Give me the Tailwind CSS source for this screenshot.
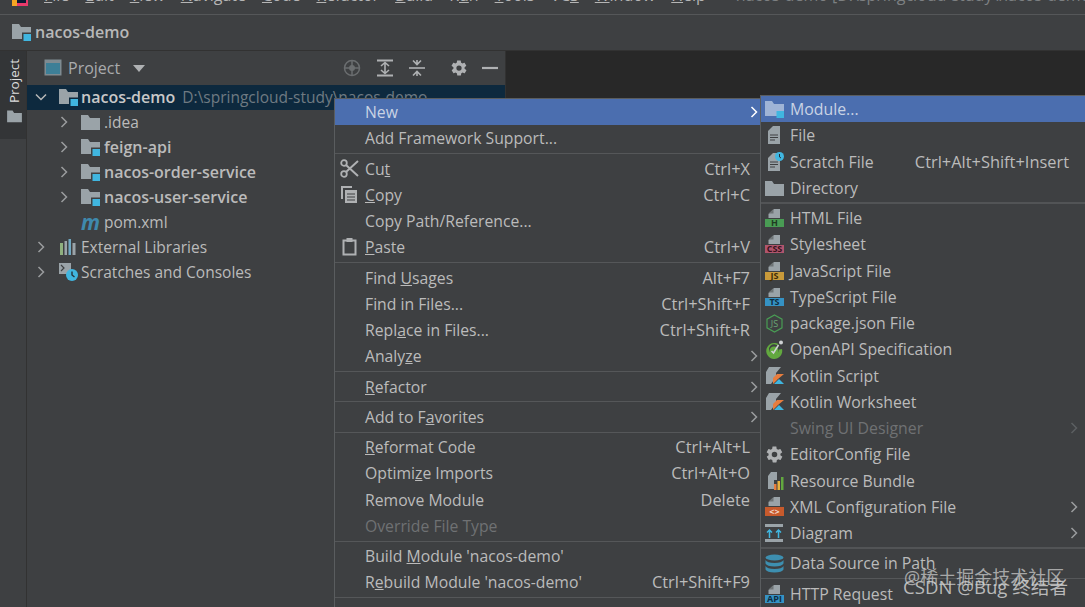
<!DOCTYPE html>
<html><head><meta charset="utf-8">
<script src="https://cdn.jsdelivr.net/npm/@tailwindcss/browser@4"></script>
</head>
<body class="m-0 bg-[#3e4042]">
<svg width="0" height="0" class="absolute">
<defs>
<symbol id="folder" viewBox="0 0 19 18"><path d="M0 2h7l2 3h10v12H0z" fill="#9aa3a8"/></symbol>
<symbol id="module" viewBox="0 0 19 18"><path d="M0 1h7l2 3h10v12H0z" fill="#9aa3a8"/><rect x="10" y="9.500" width="9" height="8.500" fill="#3e4042"/><rect x="11.500" y="11" width="7.500" height="7" fill="#40b6e0"/></symbol>
<symbol id="moduleSel" viewBox="0 0 19 18"><path d="M0 1h7l2 3h10v12H0z" fill="#9aa3a8"/><rect x="10" y="9.500" width="9" height="8.500" fill="#0d293e"/><rect x="11.500" y="11" width="7.500" height="7" fill="#40b6e0"/></symbol>
<symbol id="doc" viewBox="0 0 19 20"><path d="M8 1h7v18H3V6z" fill="#9aa3a8"/><path d="M5 10h8M5 12.500h8M5 15h5" stroke="#3e4042" stroke-width="1.200"/></symbol>
<symbol id="sheet" viewBox="0 0 19 10"><path d="M9 0h6v9H3.500V5z" fill="#9aa3a8"/><path d="M3.500 4.500L8.500 0v4.500z" fill="#6e7476"/></symbol>
<symbol id="kotlin" viewBox="0 0 19 19"><path d="M4 1h12l-5 6v4l-5 7H1V6z" fill="#9aa3a8"/><path d="M8 18v-6l4-4h7l-6 5z" fill="#e87d3e"/><path d="M9 18l5-5 5 5z" fill="#40b6e0"/></symbol>
<symbol id="chev" viewBox="0 0 10 14"><path d="M2.500 2l5 5-5 5" fill="none" stroke="currentColor" stroke-width="1.500"/></symbol>
</defs>
</svg>
<div class="relative w-[1085px] h-[607px] overflow-hidden bg-[#3e4042] text-[#bbbbbb] text-[15.75px] leading-[22px] font-['Open_Sans','Noto_Sans',sans-serif]">

<!-- menu bar -->
<div class="flex items-end h-[15px] overflow-hidden border-b border-[#555759] pb-[8px] pl-[12px]">
  <svg class="w-[16px] h-[18px] mr-[16px] shrink-0" viewBox="0 0 16 18"><rect x="0" y="0" width="16" height="18" fill="#e83a6b"/><rect x="3" y="0" width="11" height="15" fill="#0b1a33"/><rect x="0" y="12" width="5" height="6" fill="#f5a623"/></svg>
  <div class="flex gap-[16px] items-end text-[16px] text-[#b5b5b5]">
    <span><u>F</u>ile</span><span><u>E</u>dit</span><span><u>V</u>iew</span><span><u>N</u>avigate</span><span><u>C</u>ode</span><span><u>R</u>efactor</span><span><u>B</u>uild</span><span>R<u>u</u>n</span><span><u>T</u>ools</span><span>VC<u>S</u></span><span><u>W</u>indow</span><span><u>H</u>elp</span>
  </div>
  <span class="ml-[30px] text-[16px] text-[#7d8082] whitespace-nowrap">nacos-demo [D:\springcloud-study\nacos-demo]</span>
</div>

<!-- navigation bar -->
<div class="flex items-center h-[36px] pl-[12px] pb-[1px] gap-[4px] border-b border-[#323232] text-[16px] font-semibold text-[#b8b8b8]">
  <svg class="w-[19px] h-[18px]"><use href="#module"/></svg>
  <span>nacos-demo</span>
</div>

<!-- body -->
<div class="flex h-[556px]">
  <!-- stripe -->
  <div class="w-[27px] shrink-0 border-r border-[#323232]">
    <div class="flex flex-col items-center bg-[#333537] h-[88px] pt-[8px] pl-[2px] gap-[6px]">
      <span class="[writing-mode:vertical-rl] rotate-180 text-[13.5px] leading-[16px] text-[#dddddd]">Project</span>
      <svg class="w-[15px] h-[14px]"><use href="#folder"/></svg>
    </div>
  </div>
  <!-- project tool window -->
  <div class="w-[478px] shrink-0 flex flex-col text-[15.5px]">
    <div class="flex items-center h-[34px] pl-[17px] text-[16px] text-[#a9abad]">
      <svg class="w-[18px] h-[18px] mr-[6px]" viewBox="0 0 18 18"><rect x="0.500" y="0.500" width="17" height="16" fill="#7f8b91"/><rect x="2" y="4" width="14" height="11" fill="#3d7f97"/></svg>
      <span>Project</span>
      <svg class="w-[12px] h-[7px] ml-[13px]" viewBox="0 0 12 7"><path d="M0 0h12L6 7z" fill="#afb1b3"/></svg>
      <div class="ml-auto flex items-center gap-[14px] pr-[7px]">
        <svg class="w-[18px] h-[18px]" viewBox="0 0 18 18"><circle cx="9" cy="9" r="7.500" fill="none" stroke="#6b6e70" stroke-width="1.500"/><path d="M9 1v16M1 9h16" stroke="#6b6e70" stroke-width="1.500"/><circle cx="9" cy="9" r="3" fill="#6b6e70"/></svg>
        <svg class="w-[18px] h-[18px] ml-[1px]" viewBox="0 0 18 18"><path d="M1 1.500h16M1 16.500h16" stroke="#afb1b3" stroke-width="2"/><path d="M5 7l4-3.500L13 7M5 11l4 3.500L13 11M9 4v10" fill="none" stroke="#afb1b3" stroke-width="1.600"/></svg>
        <svg class="w-[18px] h-[18px]" viewBox="0 0 18 18"><path d="M1 9h16" stroke="#afb1b3" stroke-width="1.600"/><path d="M5 1.500l4 4 4-4M5 16.500l4-4 4 4M9 1v4.500M9 12.500V17" fill="none" stroke="#afb1b3" stroke-width="1.600"/></svg>
        <svg class="w-[18px] h-[18px] ml-[10px]" viewBox="0 0 24 24"><path fill="#afb1b3" d="M19.400 13c0-.3.100-.7.100-1s0-.7-.1-1l2.100-1.600c.2-.1.200-.4.100-.6l-2-3.500c-.1-.2-.4-.3-.6-.2l-2.500 1c-.5-.4-1.100-.7-1.700-1l-.4-2.600c0-.3-.2-.5-.5-.5h-4c-.3 0-.5.200-.5.400l-.4 2.700c-.6.200-1.200.6-1.700 1l-2.500-1c-.2-.1-.5 0-.6.200l-2 3.500c-.1.200-.1.500.1.600L4.600 11c0 .3-.1.700-.1 1s0 .7.1 1l-2.100 1.600c-.2.100-.2.400-.1.600l2 3.500c.1.200.4.300.6.200l2.500-1c.5.400 1.100.7 1.700 1l.4 2.600c0 .3.200.5.500.5h4c.3 0 .5-.2.500-.4l.4-2.700c.6-.2 1.200-.6 1.700-1l2.500 1c.2.100.5 0 .6-.2l2-3.500c.1-.2.100-.5-.1-.6zM12 15.500a3.500 3.500 0 1 1 0-7 3.500 3.500 0 0 1 0 7z"/></svg>
        <svg class="w-[16px] h-[16px]" viewBox="0 0 16 16"><path d="M0 8h16" stroke="#afb1b3" stroke-width="2.200"/></svg>
      </div>
    </div>
    <!-- tree -->
    <div class="flex flex-col">
      <div class="flex items-center h-[25px] pb-[2px] bg-[#0d293e] pl-[9px] whitespace-nowrap overflow-hidden">
        <svg class="w-[10px] h-[14px] rotate-90 text-[#b8b8b8]"><use href="#chev"/></svg>
        <svg class="w-[19px] h-[18px] ml-[13px] mr-[3px]"><use href="#moduleSel"/></svg>
        <span class="text-[16px] font-semibold text-[#c8c8c8]">nacos-demo</span>
        <span class="ml-[7px] text-[#6f7a82]">D:\springcloud-study\nacos-demo</span>
      </div>
      <div class="flex items-center h-[25px] pb-[2px] pl-[32px]">
        <svg class="w-[10px] h-[14px] text-[#9a9c9e]"><use href="#chev"/></svg>
        <svg class="w-[19px] h-[18px] ml-[12px] mr-[4px]"><use href="#folder"/></svg>
        <span>.idea</span>
      </div>
      <div class="flex items-center h-[25px] pb-[2px] pl-[32px] text-[16px] font-semibold">
        <svg class="w-[10px] h-[14px] text-[#9a9c9e]"><use href="#chev"/></svg>
        <svg class="w-[19px] h-[18px] ml-[12px] mr-[4px]"><use href="#module"/></svg>
        <span>feign-api</span>
      </div>
      <div class="flex items-center h-[25px] pb-[2px] pl-[32px] text-[16px] font-semibold">
        <svg class="w-[10px] h-[14px] text-[#9a9c9e]"><use href="#chev"/></svg>
        <svg class="w-[19px] h-[18px] ml-[12px] mr-[4px]"><use href="#module"/></svg>
        <span>nacos-order-service</span>
      </div>
      <div class="flex items-center h-[25px] pb-[2px] pl-[32px] text-[16px] font-semibold">
        <svg class="w-[10px] h-[14px] text-[#9a9c9e]"><use href="#chev"/></svg>
        <svg class="w-[19px] h-[18px] ml-[12px] mr-[4px]"><use href="#module"/></svg>
        <span>nacos-user-service</span>
      </div>
      <div class="flex items-center h-[25px] pb-[2px] pl-[54px]">
        <span class="w-[19px] mr-[4px] italic font-bold text-[21px] leading-[18px] text-[#3f89ad]">m</span>
        <span>pom.xml</span>
      </div>
      <div class="flex items-center h-[25px] pb-[2px] pl-[9px]">
        <svg class="w-[10px] h-[14px] text-[#9a9c9e]"><use href="#chev"/></svg>
        <svg class="w-[18px] h-[18px] ml-[13px] mr-[4px]" viewBox="0 0 18 18"><path d="M1 5h3v12H1z" fill="#8fb07f"/><path d="M5.500 3h2.500v14H5.500z" fill="#9aa3a8"/><path d="M9.500 1h2.500v16H9.500z" fill="#6fa8c2"/><path d="M13.500 5h3v12h-3z" fill="#9aa3a8"/></svg>
        <span>External Libraries</span>
      </div>
      <div class="flex items-center h-[25px] pb-[2px] pl-[9px]">
        <svg class="w-[10px] h-[14px] text-[#9a9c9e]"><use href="#chev"/></svg>
        <svg class="w-[19px] h-[19px] ml-[13px] mr-[3px]" viewBox="0 0 19 19"><rect x="0" y="1" width="12" height="11" fill="#9aa3a8"/><path d="M2 3l3 3-3 3" fill="none" stroke="#3e4042" stroke-width="1.200"/><circle cx="13" cy="13" r="6" fill="#40b6e0"/><path d="M13 9.500V13l2.500 2" fill="none" stroke="#26323a" stroke-width="1.400"/></svg>
        <span>Scratches and Consoles</span>
      </div>
    </div>
  </div>
  <!-- editor -->
  <div class="flex-1 bg-[#282828] border-l border-[#323232]"></div>
</div>

<!-- main context menu -->
<div class="absolute left-[334px] top-[98px] w-[426px] flex flex-col bg-[#3e4042] border-l border-t border-[#5a5d5f] whitespace-nowrap">
  <div class="flex items-center justify-between h-[26.250px] pl-[30px] pr-[1px] bg-[#4b6eaf] text-[#c9d3e4]"><span>New</span><svg class="w-[10px] h-[14px] text-white"><use href="#chev"/></svg></div>
  <div class="flex items-center h-[26.250px] pl-[30px]">Add Framework Support...</div>
  <div class="h-[4px] flex items-center"><div class="w-full h-px bg-[#555759]"></div></div>
  <div class="relative flex items-center justify-between h-[26.250px] pl-[30px] pr-[10px]"><svg class="absolute left-[5px] top-[3px] w-[19px] h-[19px]" viewBox="0 0 19 19"><circle cx="4" cy="15" r="2.800" fill="none" stroke="#afb1b3" stroke-width="1.800"/><circle cx="4" cy="4" r="2.800" fill="none" stroke="#afb1b3" stroke-width="1.800"/><path d="M6 6l12 11M6 13L18 2" stroke="#afb1b3" stroke-width="2"/></svg><span>Cu<u>t</u></span><span class="text-[16.4px]">Ctrl+X</span></div>
  <div class="relative flex items-center justify-between h-[26.250px] pl-[30px] pr-[10px]"><svg class="absolute left-[5px] top-[3px] w-[19px] h-[19px]" viewBox="0 0 19 19"><path d="M1 1h11v2H3v11H1z" fill="#afb1b3"/><rect x="5" y="5" width="12" height="13" fill="#afb1b3"/><path d="M7 9h8M7 12h8M7 15h8" stroke="#3e4042" stroke-width="1.200"/></svg><span><u>C</u>opy</span><span class="text-[16.4px]">Ctrl+C</span></div>
  <div class="flex items-center h-[26.250px] pl-[30px]">Copy Path/Reference...</div>
  <div class="relative flex items-center justify-between h-[26.250px] pl-[30px] pr-[10px]"><svg class="absolute left-[5px] top-[3px] w-[19px] h-[19px]" viewBox="0 0 19 19"><rect x="3.500" y="3.500" width="12" height="14" fill="none" stroke="#afb1b3" stroke-width="2"/><rect x="6.500" y="1" width="6" height="4" fill="#afb1b3"/></svg><span><u>P</u>aste</span><span class="text-[16.4px]">Ctrl+V</span></div>
  <div class="h-[4px] flex items-center"><div class="w-full h-px bg-[#555759]"></div></div>
  <div class="flex items-center justify-between h-[26.250px] pl-[30px] pr-[10px]"><span>Find <u>U</u>sages</span><span class="text-[16.4px]">Alt+F7</span></div>
  <div class="flex items-center justify-between h-[26.250px] pl-[30px] pr-[10px]"><span>Find in Files...</span><span class="text-[16.4px]">Ctrl+Shift+F</span></div>
  <div class="flex items-center justify-between h-[26.250px] pl-[30px] pr-[10px]"><span>Repl<u>a</u>ce in Files...</span><span class="text-[16.4px]">Ctrl+Shift+R</span></div>
  <div class="flex items-center justify-between h-[26.250px] pl-[30px] pr-[1px]"><span>Analy<u>z</u>e</span><svg class="w-[10px] h-[14px] text-[#9a9c9e]"><use href="#chev"/></svg></div>
  <div class="h-[4px] flex items-center"><div class="w-full h-px bg-[#555759]"></div></div>
  <div class="flex items-center justify-between h-[26.250px] pl-[30px] pr-[1px]"><span><u>R</u>efactor</span><svg class="w-[10px] h-[14px] text-[#9a9c9e]"><use href="#chev"/></svg></div>
  <div class="h-[4px] flex items-center"><div class="w-full h-px bg-[#555759]"></div></div>
  <div class="flex items-center justify-between h-[26.250px] pl-[30px] pr-[1px]"><span>Add to F<u>a</u>vorites</span><svg class="w-[10px] h-[14px] text-[#9a9c9e]"><use href="#chev"/></svg></div>
  <div class="h-[4px] flex items-center"><div class="w-full h-px bg-[#555759]"></div></div>
  <div class="flex items-center justify-between h-[26.250px] pl-[30px] pr-[10px]"><span><u>R</u>eformat Code</span><span class="text-[16.4px]">Ctrl+Alt+L</span></div>
  <div class="flex items-center justify-between h-[26.250px] pl-[30px] pr-[10px]"><span>Optimi<u>z</u>e Imports</span><span class="text-[16.4px]">Ctrl+Alt+O</span></div>
  <div class="flex items-center justify-between h-[26.250px] pl-[30px] pr-[10px]"><span>Remove Module</span><span class="text-[16.4px]">Delete</span></div>
  <div class="flex items-center h-[26.250px] pl-[30px] text-[#6f7173]">Override File Type</div>
  <div class="h-[4px] flex items-center"><div class="w-full h-px bg-[#555759]"></div></div>
  <div class="flex items-center h-[26.250px] pl-[30px]"><span>Build <u>M</u>odule 'nacos-demo'</span></div>
  <div class="flex items-center justify-between h-[26.250px] pl-[30px] pr-[10px]"><span>R<u>e</u>build Module 'nacos-demo'</span><span class="text-[16.4px]">Ctrl+Shift+F9</span></div>
  <div class="h-[4px] flex items-center"><div class="w-full h-px bg-[#555759]"></div></div>
  <div class="flex items-center justify-between h-[26.250px] pl-[30px] pr-[1px]"><span>Open In</span><svg class="w-[10px] h-[14px] text-[#9a9c9e]"><use href="#chev"/></svg></div>
</div>

<!-- submenu -->
<div class="absolute left-[760px] top-[95px] w-[325px] flex flex-col bg-[#3e4042] border-l border-t border-[#5a5d5f] whitespace-nowrap text-[15.85px]">
  <div class="flex items-center h-[26.250px] pl-[4px] bg-[#4b6eaf] text-[#c9d3e4]"><svg class="w-[19px] h-[18px] mr-[6px]" viewBox="0 0 19 18"><path d="M0 1h7l2 3h10v12H0z" fill="#9fb4d6"/><rect x="11.500" y="11" width="7.500" height="7" fill="#40b6e0"/></svg><span>Module...</span></div>
  <div class="flex items-center h-[26.250px] pl-[4px]"><svg class="w-[19px] h-[20px] mr-[6px]"><use href="#doc"/></svg><span>File</span></div>
  <div class="flex items-center justify-between h-[26.250px] pl-[4px] pr-[16px]"><span class="flex items-center"><span class="relative w-[19px] h-[20px] mr-[6px]"><svg class="w-[19px] h-[20px]"><use href="#doc"/></svg><svg class="absolute right-0 top-0 w-[9px] h-[9px]" viewBox="0 0 9 9"><circle cx="4.500" cy="4.500" r="4.500" fill="#40b6e0"/><path d="M4.500 2v3l1.500 1" stroke="#26323a" fill="none"/></svg></span><span>Scratch File</span></span><span class="text-[16.4px]">Ctrl+Alt+Shift+Insert</span></div>
  <div class="flex items-center h-[26.250px] pl-[4px]"><svg class="w-[19px] h-[18px] mr-[6px]"><use href="#folder"/></svg><span>Directory</span></div>
  <div class="h-[4px] flex items-center"><div class="w-full h-[2px] bg-[#525456]"></div></div>

  <div class="flex items-center h-[26.250px] pl-[4px]"><span class="flex flex-col w-[19px] mr-[6px]"><svg class="w-[19px] h-[10px]"><use href="#sheet"/></svg><span class="h-[8px] bg-[#499c54] text-[9px] leading-[8px] font-bold text-center text-[#1f3a22]">H</span></span><span>HTML File</span></div>
  <div class="flex items-center h-[26.250px] pl-[4px]"><span class="flex flex-col w-[19px] mr-[6px]"><svg class="w-[19px] h-[10px]"><use href="#sheet"/></svg><span class="h-[8px] bg-[#b0556d] text-[9px] leading-[8px] font-bold text-center text-[#38121c]">CSS</span></span><span>Stylesheet</span></div>
  <div class="flex items-center h-[26.250px] pl-[4px]"><span class="flex flex-col w-[19px] mr-[6px]"><svg class="w-[19px] h-[10px]"><use href="#sheet"/></svg><span class="h-[8px] bg-[#c99a3a] text-[9px] leading-[8px] font-bold text-center text-[#3f2d08]">JS</span></span><span>JavaScript File</span></div>
  <div class="flex items-center h-[26.250px] pl-[4px]"><span class="flex flex-col w-[19px] mr-[6px]"><svg class="w-[19px] h-[10px]"><use href="#sheet"/></svg><span class="h-[8px] bg-[#3592c4] text-[9px] leading-[8px] font-bold text-center text-[#0e2d40]">TS</span></span><span>TypeScript File</span></div>
  <div class="flex items-center h-[26.250px] pl-[4px]"><span class="relative flex items-center justify-center w-[19px] h-[19px] mr-[6px]"><svg class="absolute inset-0 w-[19px] h-[19px]" viewBox="0 0 19 19"><path d="M9.500 1l7.500 4.200v8.600L9.500 18 2 13.800V5.200z" fill="none" stroke="#499c54" stroke-width="1.200"/></svg><span class="relative text-[9px] leading-[9px] text-[#6aa875]">JS</span></span><span>package.json File</span></div>
  <div class="flex items-center h-[26.250px] pl-[4px]"><svg class="w-[19px] h-[19px] mr-[6px]" viewBox="0 0 19 19"><path d="M14 4.500A8 8 0 1 0 17 9l-3 .5A5 5 0 1 1 11.500 5z" fill="#62a83f"/><circle cx="9" cy="11" r="4.500" fill="#62a83f"/><path d="M6.500 11l2 2 5-8" fill="none" stroke="#cfd2d4" stroke-width="1.600"/><circle cx="16" cy="2.500" r="2" fill="#cfd2d4"/></svg><span>OpenAPI Specification</span></div>
  <div class="flex items-center h-[26.250px] pl-[4px]"><svg class="w-[19px] h-[19px] mr-[6px]"><use href="#kotlin"/></svg><span>Kotlin Script</span></div>
  <div class="flex items-center h-[26.250px] pl-[4px]"><svg class="w-[19px] h-[19px] mr-[6px]"><use href="#kotlin"/></svg><span>Kotlin Worksheet</span></div>
  <div class="flex items-center justify-between h-[26.250px] pl-[29px] pr-[6px] text-[#6f7173]"><span>Swing UI Designer</span><svg class="w-[10px] h-[14px] text-[#5c5f61]"><use href="#chev"/></svg></div>
  <div class="flex items-center h-[26.250px] pl-[4px]"><svg class="w-[19px] h-[19px] mr-[6px]" viewBox="0 0 24 24"><path fill="#afb1b3" d="M19.400 13c0-.3.100-.7.100-1s0-.7-.1-1l2.100-1.600c.2-.1.200-.4.100-.6l-2-3.500c-.1-.2-.4-.3-.6-.2l-2.500 1c-.5-.4-1.100-.7-1.700-1l-.4-2.600c0-.3-.2-.5-.5-.5h-4c-.3 0-.5.200-.5.400l-.4 2.700c-.6.200-1.200.6-1.700 1l-2.500-1c-.2-.1-.5 0-.6.200l-2 3.500c-.1.200-.1.500.1.600L4.600 11c0 .3-.1.700-.1 1s0 .7.1 1l-2.100 1.600c-.2.100-.2.400-.1.600l2 3.500c.1.200.4.300.6.200l2.500-1c.5.400 1.100.7 1.700 1l.4 2.600c0 .3.200.5.500.5h4c.3 0 .5-.2.500-.4l.4-2.700c.6-.2 1.200-.6 1.700-1l2.500 1c.2.100.5 0 .6-.2l2-3.500c.1-.2.100-.5-.1-.6zM12 15.500a3.500 3.500 0 1 1 0-7 3.500 3.500 0 0 1 0 7z"/></svg><span>EditorConfig File</span></div>
  <div class="flex items-center h-[26.250px] pl-[4px]"><svg class="w-[19px] h-[19px] mr-[6px]" viewBox="0 0 19 19"><path d="M6 1h6v8H9v9H3V5z" fill="#9aa3a8"/><rect x="9" y="13" width="2.500" height="6" fill="#e87d3e"/><rect x="12.500" y="10" width="2.500" height="9" fill="#e8b13e"/><rect x="16" y="6" width="2.500" height="13" fill="#62a83f"/></svg><span>Resource Bundle</span></div>
  <div class="flex items-center justify-between h-[26.250px] pl-[4px] pr-[6px]"><span class="flex items-center"><span class="flex flex-col w-[19px] mr-[6px]"><svg class="w-[19px] h-[10px]"><use href="#sheet"/></svg><span class="h-[9px] bg-[#c75a2c] text-[9px] leading-[9px] font-bold text-center text-[#f0d6c8]">&lt;&gt;</span></span><span>XML Configuration File</span></span><svg class="w-[10px] h-[14px] text-[#9a9c9e]"><use href="#chev"/></svg></div>
  <div class="flex items-center justify-between h-[26.250px] pl-[4px] pr-[6px]"><span class="flex items-center"><svg class="w-[19px] h-[18px] mr-[6px]" viewBox="0 0 19 18"><rect x="0" y="0" width="18" height="3" fill="#9aa3a8"/><rect x="0" y="15" width="18" height="3" fill="#9aa3a8"/><path d="M4.500 14V6M2 8.500l2.500-2.500L7 8.500M13.500 14V6M11 8.500l2.500-2.500L16 8.500" fill="none" stroke="#40b6e0" stroke-width="1.500"/></svg><span>Diagram</span></span><svg class="w-[10px] h-[14px] text-[#9a9c9e]"><use href="#chev"/></svg></div>
  <div class="h-[4px] flex items-center"><div class="w-full h-[2px] bg-[#525456]"></div></div>
  <div class="flex items-center h-[26.250px] pl-[4px]"><svg class="w-[19px] h-[19px] mr-[6px]" viewBox="0 0 19 19"><ellipse cx="9.500" cy="3.500" rx="9" ry="3" fill="#3d8fb0"/><path d="M.5 6c1 2 4 3 9 3s8-1 9-3v3.500c-1 2-4 3-9 3s-8-1-9-3z" fill="#3d8fb0"/><path d="M.5 12c1 2 4 3 9 3s8-1 9-3v3.500c-1 2-4 3-9 3s-8-1-9-3z" fill="#3d8fb0"/></svg><span>Data Source in Path</span></div>
  <div class="h-[4px] flex items-center"><div class="w-full h-px bg-[#555759]"></div></div>
  <div class="flex items-center h-[26.250px] pl-[4px]"><span class="flex flex-col w-[19px] mr-[6px]"><svg class="w-[19px] h-[10px]"><use href="#sheet"/></svg><span class="h-[8px] bg-[#3592c4] text-[9px] leading-[8px] font-bold text-center text-[#0e2d40]">API</span></span><span>HTTP Request</span></div>
</div>

<!-- watermark -->
<div class="absolute left-[904px] top-[566px] text-[18px] leading-[22px] text-[#c4c4c4]/80 whitespace-nowrap font-['Open_Sans','Noto_Sans_CJK_SC',sans-serif]">@稀土掘金技术社区</div>
<div class="absolute left-[903px] top-[576px] text-[18.6px] leading-[22px] text-[#d0d0d0]/85 whitespace-nowrap font-['Open_Sans','Noto_Sans_CJK_SC',sans-serif]">CSDN @Bug 终结者</div>
</div>
</body></html>
